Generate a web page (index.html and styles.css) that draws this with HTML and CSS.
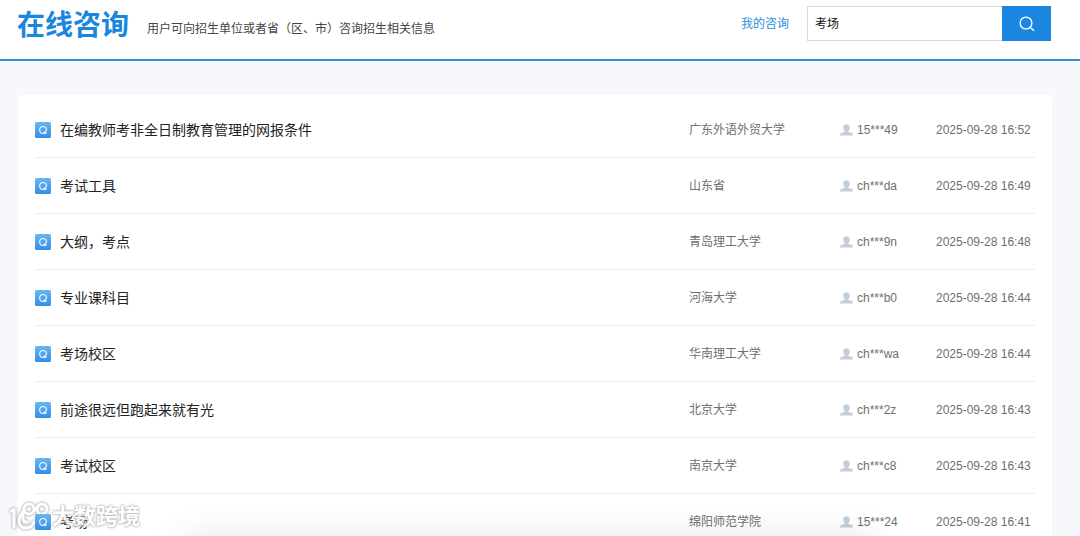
FILE: index.html
```html
<!DOCTYPE html>
<html lang="zh-CN">
<head>
<meta charset="utf-8">
<title>在线咨询</title>
<link rel="stylesheet" href="styles.css">
</head>
<body>
<svg class="defs" aria-hidden="true">
  <defs>
    <linearGradient id="badge-fill" x1="0" y1="0" x2="0" y2="1">
      <stop offset="0" stop-color="#68b6f4"/>
      <stop offset="1" stop-color="#3290e6"/>
    </linearGradient>
    <symbol id="badge" viewBox="0 0 16 16">
      <rect width="16" height="16" rx="1.5" fill="url(#badge-fill)"/>
      <ellipse cx="8" cy="8" rx="3.3" ry="3.5" fill="none" stroke="#f0f9ff" stroke-width="1.2"/>
      <path d="M8.4 9.6 L11.2 12" stroke="#f0f9ff" stroke-width="1.2"/>
    </symbol>
    <symbol id="person" viewBox="0 0 13 12">
      <path d="M6.5 0.2C4.5 0.2 3.2 1.5 3.2 3.4C3.2 5 3.9 6.3 4.7 7V7.8C3.8 8.5 0.3 8.4 0 10.6V11.6H13V10.6C12.7 8.4 9.2 8.5 8.3 7.8V7C9.1 6.3 9.8 5 9.8 3.4C9.8 1.5 8.5 0.2 6.5 0.2Z" fill="#c5cfdb"/>
    </symbol>
  </defs>
</svg>
<header class="header">
  <h1 class="title">在线咨询</h1>
  <p class="intro">用户可向招生单位或者省（区、市）咨询招生相关信息</p>
  <a class="mine" href="#">我的咨询</a>
  <form class="search">
    <input class="search-input" type="text" value="考场" aria-label="搜索咨询">
    <button class="search-button" type="button" aria-label="搜索">
      <svg width="16" height="16" viewBox="0 0 16 16" fill="none" stroke="#fff" stroke-width="1.4"><circle cx="7" cy="7" r="5.9"/><path d="M11.2 11.2 L15 14.8"/></svg>
    </button>
  </form>
</header>
<main class="card">
  <table class="list">
    <tbody>
      <tr><td class="question"><a class="question-link" href="#"><svg class="badge"><use href="#badge"/></svg>在编教师考非全日制教育管理的网报条件</a></td><td class="school">广东外语外贸大学</td><td class="user"><span class="user-name"><svg class="person"><use href="#person"/></svg>15***49</span></td><td class="time">2025-09-28 16:52</td></tr>
      <tr><td class="question"><a class="question-link" href="#"><svg class="badge"><use href="#badge"/></svg>考试工具</a></td><td class="school">山东省</td><td class="user"><span class="user-name"><svg class="person"><use href="#person"/></svg>ch***da</span></td><td class="time">2025-09-28 16:49</td></tr>
      <tr><td class="question"><a class="question-link" href="#"><svg class="badge"><use href="#badge"/></svg>大纲，考点</a></td><td class="school">青岛理工大学</td><td class="user"><span class="user-name"><svg class="person"><use href="#person"/></svg>ch***9n</span></td><td class="time">2025-09-28 16:48</td></tr>
      <tr><td class="question"><a class="question-link" href="#"><svg class="badge"><use href="#badge"/></svg>专业课科目</a></td><td class="school">河海大学</td><td class="user"><span class="user-name"><svg class="person"><use href="#person"/></svg>ch***b0</span></td><td class="time">2025-09-28 16:44</td></tr>
      <tr><td class="question"><a class="question-link" href="#"><svg class="badge"><use href="#badge"/></svg>考场校区</a></td><td class="school">华南理工大学</td><td class="user"><span class="user-name"><svg class="person"><use href="#person"/></svg>ch***wa</span></td><td class="time">2025-09-28 16:44</td></tr>
      <tr><td class="question"><a class="question-link" href="#"><svg class="badge"><use href="#badge"/></svg>前途很远但跑起来就有光</a></td><td class="school">北京大学</td><td class="user"><span class="user-name"><svg class="person"><use href="#person"/></svg>ch***2z</span></td><td class="time">2025-09-28 16:43</td></tr>
      <tr><td class="question"><a class="question-link" href="#"><svg class="badge"><use href="#badge"/></svg>考试校区</a></td><td class="school">南京大学</td><td class="user"><span class="user-name"><svg class="person"><use href="#person"/></svg>ch***c8</span></td><td class="time">2025-09-28 16:43</td></tr>
      <tr><td class="question"><a class="question-link" href="#"><svg class="badge"><use href="#badge"/></svg>考场</a></td><td class="school">绵阳师范学院</td><td class="user"><span class="user-name"><svg class="person"><use href="#person"/></svg>15***24</span></td><td class="time">2025-09-28 16:41</td></tr>
    </tbody>
  </table>
</main>
<div class="panel-shadow"></div>
<div class="watermark">
  <svg class="watermark-logo" viewBox="0 0 42 30" fill="none" stroke="#fff" stroke-width="3" stroke-linecap="round">
    <path d="M2 9 C4 9 5 8 5 6 V25"/>
    <path d="M14 10 C8 16 9 25 16 26 C21 26 24 24 25 20"/>
    <path d="M14 10 V17 C14 19 16 20 18 20"/>
    <circle cx="20" cy="7" r="5"/>
    <circle cx="33" cy="7" r="5"/>
    <path d="M24 10 L29 4"/>
  </svg>
  <span>大数跨境</span>
</div>
</body>
</html>
```
FILE: styles.css
```css
* {
  box-sizing: border-box;
}

body {
  margin: 0;
  height: 100vh;
  overflow: hidden;
  background: #f6f8fb;
  color: #6b6f76;
  font: 12px/18px "Liberation Sans", "Noto Sans CJK SC", sans-serif;
}

a {
  text-decoration: none;
}

.defs {
  position: absolute;
  width: 0;
  height: 0;
}

.header {
  display: flex;
  align-items: center;
  height: 61px;
  padding: 0 29px 12px 17px;
  border-bottom: 2px solid #2f90e0;
  background: #fff;
}

.title {
  margin: 4px 0 0;
  color: #1a86e0;
  font-size: 28px;
  font-weight: 700;
  line-height: 40px;
}

.intro {
  margin: 10px auto 0 18px;
  color: #444;
}

.mine {
  margin-right: 18px;
  color: #2b8cdc;
}

.search {
  display: flex;
  height: 35px;
}

.search-input {
  width: 195px;
  padding: 0 7px;
  border: 1px solid #d9d9d9;
  border-right: 0;
  border-radius: 0;
  background: #fff;
  color: #111;
  font: inherit;
}

.search-button {
  display: flex;
  align-items: center;
  justify-content: center;
  width: 49px;
  padding: 0;
  border: 0;
  background: #1a86e0;
}

.card {
  margin: 34px 28px 0 18px;
  padding: 7px 17px;
  border-radius: 4px;
  background: #fff;
}

.list {
  width: 100%;
  border-spacing: 0;
  table-layout: fixed;
}

.list td {
  height: 56px;
  padding: 0;
  border-bottom: 1px solid #ebeef0;
}

.school {
  width: 151px;
}

.user {
  width: 96px;
}

.list .time {
  width: 99px;
  white-space: nowrap;
}

.question-link {
  display: flex;
  align-items: center;
  gap: 9px;
  color: #222;
  font-size: 14px;
}

.badge {
  position: relative;
  z-index: 2;
  width: 16px;
  height: 16px;
}

.user-name {
  display: flex;
  align-items: center;
  gap: 4px;
}

.person {
  width: 13px;
  height: 12px;
}

.panel-shadow {
  position: fixed;
  top: 100%;
  left: 17%;
  right: 19%;
  height: 60px;
  box-shadow: 0 6px 40px rgba(0, 0, 0, 0.14);
}

.watermark {
  position: fixed;
  z-index: 1;
  left: 9px;
  bottom: 4px;
  display: flex;
  align-items: center;
  gap: 1px;
  color: #fff;
  font-size: 22px;
  font-weight: 700;
  line-height: 30px;
  opacity: 0.85;
  filter: drop-shadow(0 0 1px #aaa) drop-shadow(0 0 1px #bbb);
}

.watermark-logo {
  width: 42px;
  height: 30px;
}
```
